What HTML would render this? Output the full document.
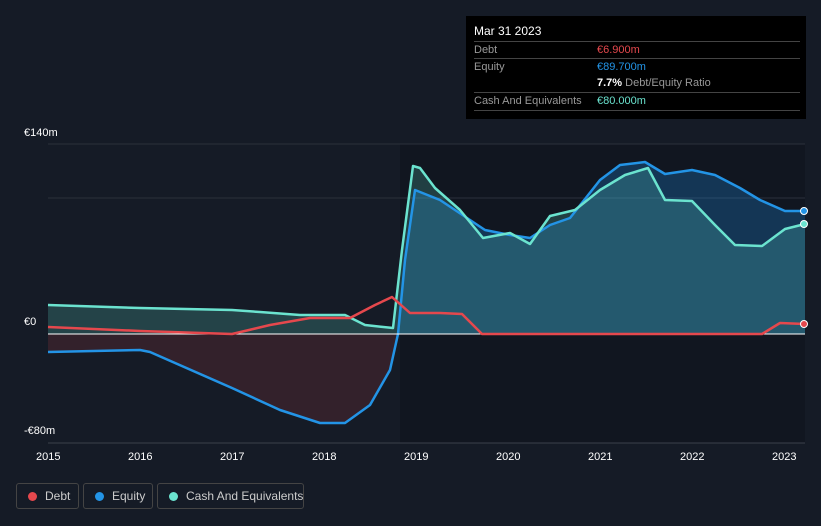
<!DOCTYPE html>
<html><head><style>
body{margin:0;background:#151b26;width:821px;height:526px;overflow:hidden;font-family:"Liberation Sans",sans-serif;position:relative}
.tip{position:absolute;left:466px;top:16px;width:340px;height:103px;background:#000;color:#fff;font-size:11px}
.row{position:absolute;left:8px;right:6px;border-top:1px solid #444;height:17px;line-height:17px;color:#999}
.row span{position:absolute;left:123px}
.ax{position:absolute;color:#fff;font-size:11px}
.leg{position:absolute;top:483px;height:26px;border:1px solid #444;border-radius:3px;color:#ccc;font-size:12px;line-height:24px;box-sizing:border-box;white-space:nowrap;overflow:hidden}
.leg i{display:inline-block;width:9px;height:9px;border-radius:50%;margin:0 8px 0 11px;vertical-align:-1px}
</style></head><body>
<svg width="821" height="526" style="position:absolute;left:0;top:0">
<rect x="400" y="144" width="405" height="299" fill="#111620"/>
<line x1="48" y1="144" x2="805" y2="144" stroke="#2a303b"/>
<line x1="48" y1="198" x2="805" y2="198" stroke="#2a303b"/>
<line x1="48" y1="443" x2="805" y2="443" stroke="#3a404b"/>
<polygon fill="rgba(229,72,77,0.15)" points="48,334 48,352 140,350 150,352 232,388 280,410 320,423 345,423 370,405 390,370 398,334"/>
<polygon fill="rgba(33,150,243,0.25)" points="398,334 405,260 415,190 440,200 470,220 485,230 510,235 530,238 550,225 570,218 600,180 620,165 645,162 665,174 692,170 715,175 740,188 760,200 785,211 805,211 805,334"/>
<polygon fill="rgba(100,230,210,0.2)" points="48,334 48,305 140,308 232,310 260,312 300,315 345,315 365,325 393,328 402,250 413,166 420,168 435,188 460,210 483,238 510,233 530,244 550,216 575,210 600,190 625,175 648,168 665,200 692,201 715,225 735,245 762,246 785,229 805,224 805,334"/>
<polyline fill="none" stroke="#2394e6" stroke-width="2.5" stroke-linejoin="round" points="48,352 140,350 150,352 232,388 280,410 320,423 345,423 370,405 390,370 398,334 405,260 415,190 440,200 470,220 485,230 510,235 530,238 550,225 570,218 600,180 620,165 645,162 665,174 692,170 715,175 740,188 760,200 785,211 805,211"/>
<polyline fill="none" stroke="#6be3cf" stroke-width="2.5" stroke-linejoin="round" points="48,305 140,308 232,310 260,312 300,315 345,315 365,325 393,328 402,250 413,166 420,168 435,188 460,210 483,238 510,233 530,244 550,216 575,210 600,190 625,175 648,168 665,200 692,201 715,225 735,245 762,246 785,229 805,224"/>
<line x1="48" y1="334" x2="805" y2="334" stroke="#fff" stroke-width="1"/>
<polyline fill="none" stroke="#e5484d" stroke-width="2.5" stroke-linejoin="round" points="48,327 140,331 232,334 270,325 310,318 350,318 375,305 392,297 410,313 440,313 462,314 482,334 762,334 780,323 805,324"/>
<circle cx="804" cy="211" r="3.5" fill="#2394e6" stroke="#fff"/>
<circle cx="804" cy="224" r="3.5" fill="#6be3cf" stroke="#fff"/>
<circle cx="804" cy="324" r="3.5" fill="#e5484d" stroke="#fff"/>
</svg>
<div class="ax" style="left:24px;top:127px">€140m</div>
<div class="ax" style="left:24px;top:316px">€0</div>
<div class="ax" style="left:24px;top:425px">-€80m</div>
<div class="ax" style="left:36px;top:451px">2015</div>
<div class="ax" style="left:128px;top:451px">2016</div>
<div class="ax" style="left:220px;top:451px">2017</div>
<div class="ax" style="left:312px;top:451px">2018</div>
<div class="ax" style="left:404px;top:451px">2019</div>
<div class="ax" style="left:496px;top:451px">2020</div>
<div class="ax" style="left:588px;top:451px">2021</div>
<div class="ax" style="left:680px;top:451px">2022</div>
<div class="ax" style="left:772px;top:451px">2023</div>
<div class="tip">
<div style="position:absolute;left:8px;top:8px;font-size:12px">Mar 31 2023</div>
<div class="row" style="top:25px">Debt<span style="color:#e5484d">€6.900m</span></div>
<div class="row" style="top:42px">Equity<span style="color:#2394e6">€89.700m</span></div>
<div class="row" style="top:59px;border-top:none"><span><b style="color:#fff">7.7%</b> Debt/Equity Ratio</span></div>
<div class="row" style="top:76px">Cash And Equivalents<span style="color:#6be3cf">€80.000m</span></div>
<div class="row" style="top:94px;height:0"></div>
</div>
<div class="leg" style="left:16px;width:63px"><i style="background:#e5484d"></i>Debt</div>
<div class="leg" style="left:83px;width:70px"><i style="background:#2394e6"></i>Equity</div>
<div class="leg" style="left:157px;width:147px"><i style="background:#6be3cf"></i>Cash And Equivalents</div>
</body></html>
